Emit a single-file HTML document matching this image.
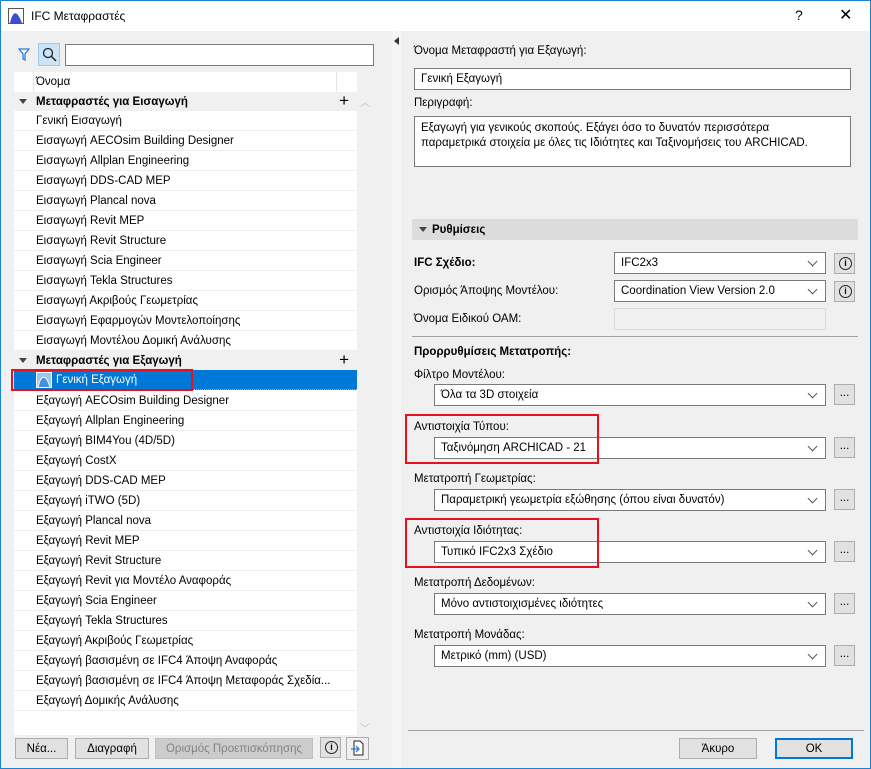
<!DOCTYPE html><html><head><meta charset="utf-8"><style>
*{box-sizing:border-box;margin:0;padding:0}
body{width:871px;height:769px;overflow:hidden;font-family:"Liberation Sans",sans-serif;font-size:11.5px;color:#000;background:#f0f0f0;position:relative}
.a{position:absolute}
.win{left:0;top:0;width:871px;height:769px;border:1px solid #1883d7}
.title{left:1px;top:1px;width:869px;height:30px;background:#fff}
.row{position:absolute;left:14px;width:343px;height:20px;border-bottom:1px solid #eee;background:#fff;padding-left:22px;line-height:21px;white-space:nowrap}
.grp{position:absolute;left:14px;width:343px;height:19px;background:#f0f0f0;padding-left:22px;line-height:20px;font-weight:bold}
.grp:before{content:"";position:absolute;left:5px;top:7px;border-left:4px solid transparent;border-right:4px solid transparent;border-top:5px solid #444}
.plus{position:absolute;right:8px;top:-1px;font-size:17px;font-weight:normal}
.lbl{position:absolute;white-space:nowrap}
.inp{position:absolute;background:#fff;border:1px solid #7a7a7a;padding-left:6px;line-height:21px;white-space:nowrap}
.sel:after{content:"";position:absolute;right:9px;top:5px;width:6px;height:6px;border-right:1px solid #555;border-bottom:1px solid #555;transform:rotate(45deg)}
.btn{position:absolute;background:#e1e1e1;border:1px solid #adadad;text-align:center;line-height:20px}
.dot{width:21px;height:21px;line-height:16px}
.info{width:21px;height:21px}
.info:after{content:"i";position:absolute;left:4px;top:3px;width:11px;height:11px;border:1px solid #222;border-radius:50%;font-size:9px;line-height:11px;text-align:center;font-weight:bold}
.red{position:absolute;border:2px solid #e8111a}
</style></head><body>
<div class="a win"></div>
<div class="a title"></div>
<svg class="a" style="left:8px;top:8px" width="17" height="17"><rect x="0.5" y="0.5" width="15" height="15" fill="#fff" stroke="#555"/><path d="M2 15 C5 2 9 2 14 15 Z" fill="#3b4fd0"/></svg>
<div class="lbl" style="left:31px;top:9px;font-size:12px">IFC Μεταφραστές</div>
<div class="lbl" style="left:795px;top:7px;font-size:14px">?</div>
<div class="lbl" style="left:839px;top:5px;font-size:16px">✕</div>
<svg class="a" style="left:18px;top:48px" width="12" height="14"><path d="M1 1H11L7 6V12L5 11V6Z" fill="none" stroke="#2a7fd4" stroke-width="1.3"/></svg>
<div class="a" style="left:38px;top:43px;width:22px;height:23px;background:#cce4f7;border:1px solid #99c9ef"></div>
<svg class="a" style="left:42px;top:47px" width="15" height="15"><circle cx="6" cy="6" r="4.5" fill="none" stroke="#222" stroke-width="1.3"/><path d="M9.5 9.5L14 14" stroke="#222" stroke-width="1.5"/></svg>
<div class="inp" style="left:65px;top:44px;width:309px;height:22px"></div>
<div class="a" style="left:14px;top:72px;width:343px;height:20px;background:#fff"></div>
<div class="a" style="left:33px;top:72px;width:1px;height:20px;background:#e5e5e5"></div>
<div class="a" style="left:336px;top:72px;width:1px;height:20px;background:#e5e5e5"></div>
<div class="lbl" style="left:36px;top:76px">Όνομα</div>
<div class="a" style="left:14px;top:92px;width:343px;height:643px;background:#fff"></div>
<div class="a" style="left:357px;top:92px;width:15px;height:643px;background:#f0f0f0"></div>
<div class="lbl" style="left:360px;top:94px;color:#bbb;font-size:10px">︿</div>
<div class="lbl" style="left:360px;top:720px;color:#bbb;font-size:10px">﹀</div>
<div class="grp" style="top:92px">Μεταφραστές για Εισαγωγή<span class="plus">+</span></div>
<div class="row" style="top:111px">Γενική Εισαγωγή</div>
<div class="row" style="top:131px">Εισαγωγή AECOsim Building Designer</div>
<div class="row" style="top:151px">Εισαγωγή Allplan Engineering</div>
<div class="row" style="top:171px">Εισαγωγή DDS-CAD MEP</div>
<div class="row" style="top:191px">Εισαγωγή Plancal nova</div>
<div class="row" style="top:211px">Εισαγωγή Revit MEP</div>
<div class="row" style="top:231px">Εισαγωγή Revit Structure</div>
<div class="row" style="top:251px">Εισαγωγή Scia Engineer</div>
<div class="row" style="top:271px">Εισαγωγή Tekla Structures</div>
<div class="row" style="top:291px">Εισαγωγή Ακριβούς Γεωμετρίας</div>
<div class="row" style="top:311px">Εισαγωγή Εφαρμογών Μοντελοποίησης</div>
<div class="row" style="top:331px">Εισαγωγή Μοντέλου Δομική Ανάλυσης</div>
<div class="grp" style="top:351px">Μεταφραστές για Εξαγωγή<span class="plus">+</span></div>
<div class="row" style="top:370px;background:#0078d7;color:#fff;padding-left:42px;border-bottom:1px dotted #f5a623">Γενική Εξαγωγή</div>
<svg class="a" style="left:36px;top:372px" width="16" height="16"><rect x="0.5" y="0.5" width="15" height="15" fill="#9cc8ee" stroke="#fff"/><path d="M2 15C5 2 10 2 14 15" fill="#4a8fd8" stroke="#fff"/></svg>
<div class="red" style="left:11px;top:369px;width:182px;height:22px"></div>
<div class="row" style="top:391px">Εξαγωγή AECOsim Building Designer</div>
<div class="row" style="top:411px">Εξαγωγή Allplan Engineering</div>
<div class="row" style="top:431px">Εξαγωγή BIM4You (4D/5D)</div>
<div class="row" style="top:451px">Εξαγωγή CostX</div>
<div class="row" style="top:471px">Εξαγωγή DDS-CAD MEP</div>
<div class="row" style="top:491px">Εξαγωγή iTWO (5D)</div>
<div class="row" style="top:511px">Εξαγωγή Plancal nova</div>
<div class="row" style="top:531px">Εξαγωγή Revit MEP</div>
<div class="row" style="top:551px">Εξαγωγή Revit Structure</div>
<div class="row" style="top:571px">Εξαγωγή Revit για Μοντέλο Αναφοράς</div>
<div class="row" style="top:591px">Εξαγωγή Scia Engineer</div>
<div class="row" style="top:611px">Εξαγωγή Tekla Structures</div>
<div class="row" style="top:631px">Εξαγωγή Ακριβούς Γεωμετρίας</div>
<div class="row" style="top:651px">Εξαγωγή βασισμένη σε IFC4 Άποψη Αναφοράς</div>
<div class="row" style="top:671px">Εξαγωγή βασισμένη σε IFC4 Άποψη Μεταφοράς Σχεδία...</div>
<div class="row" style="top:691px">Εξαγωγή Δομικής Ανάλυσης</div>
<div class="btn" style="left:15px;top:738px;width:53px;height:21px">Νέα...</div>
<div class="btn" style="left:75px;top:738px;width:74px;height:21px">Διαγραφή</div>
<div class="btn" style="left:155px;top:738px;width:158px;height:21px;background:#ccc;border-color:#bfbfbf;color:#838383">Ορισμός Προεπισκόπησης</div>
<div class="btn info" style="left:320px;top:737px"></div>
<div class="btn" style="left:346px;top:737px;width:23px;height:23px;background:#f0f0f0"></div>
<svg class="a" style="left:351px;top:740px" width="14" height="17"><path d="M3 1H9L12 4V15H3Z" fill="#fff" stroke="#222"/><path d="M0 9H8M5 6L8 9L5 12" fill="none" stroke="#2a7fd4" stroke-width="1.3"/></svg>
<div class="a" style="left:392px;top:31px;width:9px;height:737px;background:#f5f5f5"></div>
<div class="a" style="left:394px;top:37px;border-top:4px solid transparent;border-bottom:4px solid transparent;border-right:5px solid #333"></div>
<div class="lbl" style="left:414px;top:45px">Όνομα Μεταφραστή για Εξαγωγή:</div>
<div class="inp" style="left:414px;top:68px;width:437px;height:22px">Γενική Εξαγωγή</div>
<div class="lbl" style="left:414px;top:97px">Περιγραφή:</div>
<div class="inp" style="left:414px;top:116px;width:437px;height:51px;line-height:15px;padding-top:4px">Εξαγωγή για γενικούς σκοπούς. Εξάγει όσο το δυνατόν περισσότερα<br>παραμετρικά στοιχεία με όλες τις Ιδιότητες και Ταξινομήσεις του ARCHICAD.</div>
<div class="a" style="left:412px;top:219px;width:446px;height:21px;background:#dcdcdc;border-radius:2px"></div>
<div class="a" style="left:419px;top:227px;border-left:4px solid transparent;border-right:4px solid transparent;border-top:5px solid #444"></div>
<div class="lbl" style="left:432px;top:224px;font-weight:bold">Ρυθμίσεις</div>
<div class="lbl" style="left:414px;top:257px;font-weight:bold">IFC Σχέδιο:</div>
<div class="inp sel" style="left:614px;top:252px;width:212px;height:22px">IFC2x3</div>
<div class="btn info" style="left:834px;top:253px"></div>
<div class="lbl" style="left:414px;top:285px">Ορισμός Άποψης Μοντέλου:</div>
<div class="inp sel" style="left:614px;top:280px;width:212px;height:22px">Coordination View Version 2.0</div>
<div class="btn info" style="left:834px;top:281px"></div>
<div class="lbl" style="left:414px;top:313px">Όνομα Ειδικού ΟΑΜ:</div>
<div class="a" style="left:614px;top:308px;width:212px;height:22px;background:#f0f0f0;border:1px solid #d9d9d9"></div>
<div class="a" style="left:412px;top:336px;width:446px;height:1px;background:#a0a0a0"></div>
<div class="lbl" style="left:414px;top:346px;font-weight:bold">Προρρυθμίσεις Μετατροπής:</div>
<div class="lbl" style="left:414px;top:369px">Φίλτρο Μοντέλου:</div>
<div class="inp sel" style="left:434px;top:384px;width:392px;height:22px">Όλα τα 3D στοιχεία</div>
<div class="btn dot" style="left:834px;top:384px">...</div>
<div class="lbl" style="left:414px;top:421px">Αντιστοιχία Τύπου:</div>
<div class="inp sel" style="left:434px;top:437px;width:392px;height:22px">Ταξινόμηση ARCHICAD - 21</div>
<div class="btn dot" style="left:834px;top:437px">...</div>
<div class="red" style="left:405px;top:414px;width:194px;height:50px"></div>
<div class="lbl" style="left:414px;top:473px">Μετατροπή Γεωμετρίας:</div>
<div class="inp sel" style="left:434px;top:489px;width:392px;height:22px">Παραμετρική γεωμετρία εξώθησης (όπου είναι δυνατόν)</div>
<div class="btn dot" style="left:834px;top:489px">...</div>
<div class="lbl" style="left:414px;top:525px">Αντιστοιχία Ιδιότητας:</div>
<div class="inp sel" style="left:434px;top:541px;width:392px;height:22px">Τυπικό IFC2x3 Σχέδιο</div>
<div class="btn dot" style="left:834px;top:541px">...</div>
<div class="red" style="left:405px;top:518px;width:194px;height:50px"></div>
<div class="lbl" style="left:414px;top:577px">Μετατροπή Δεδομένων:</div>
<div class="inp sel" style="left:434px;top:593px;width:392px;height:22px">Μόνο αντιστοιχισμένες ιδιότητες</div>
<div class="btn dot" style="left:834px;top:593px">...</div>
<div class="lbl" style="left:414px;top:629px">Μετατροπή Μονάδας:</div>
<div class="inp sel" style="left:434px;top:645px;width:392px;height:22px">Μετρικό (mm) (USD)</div>
<div class="btn dot" style="left:834px;top:645px">...</div>
<div class="a" style="left:408px;top:730px;width:456px;height:1px;background:#a0a0a0"></div>
<div class="btn" style="left:679px;top:738px;width:78px;height:21px">Άκυρο</div>
<div class="btn" style="left:775px;top:738px;width:78px;height:21px;border:2px solid #0078d7;line-height:18px">OK</div>
</body></html>
